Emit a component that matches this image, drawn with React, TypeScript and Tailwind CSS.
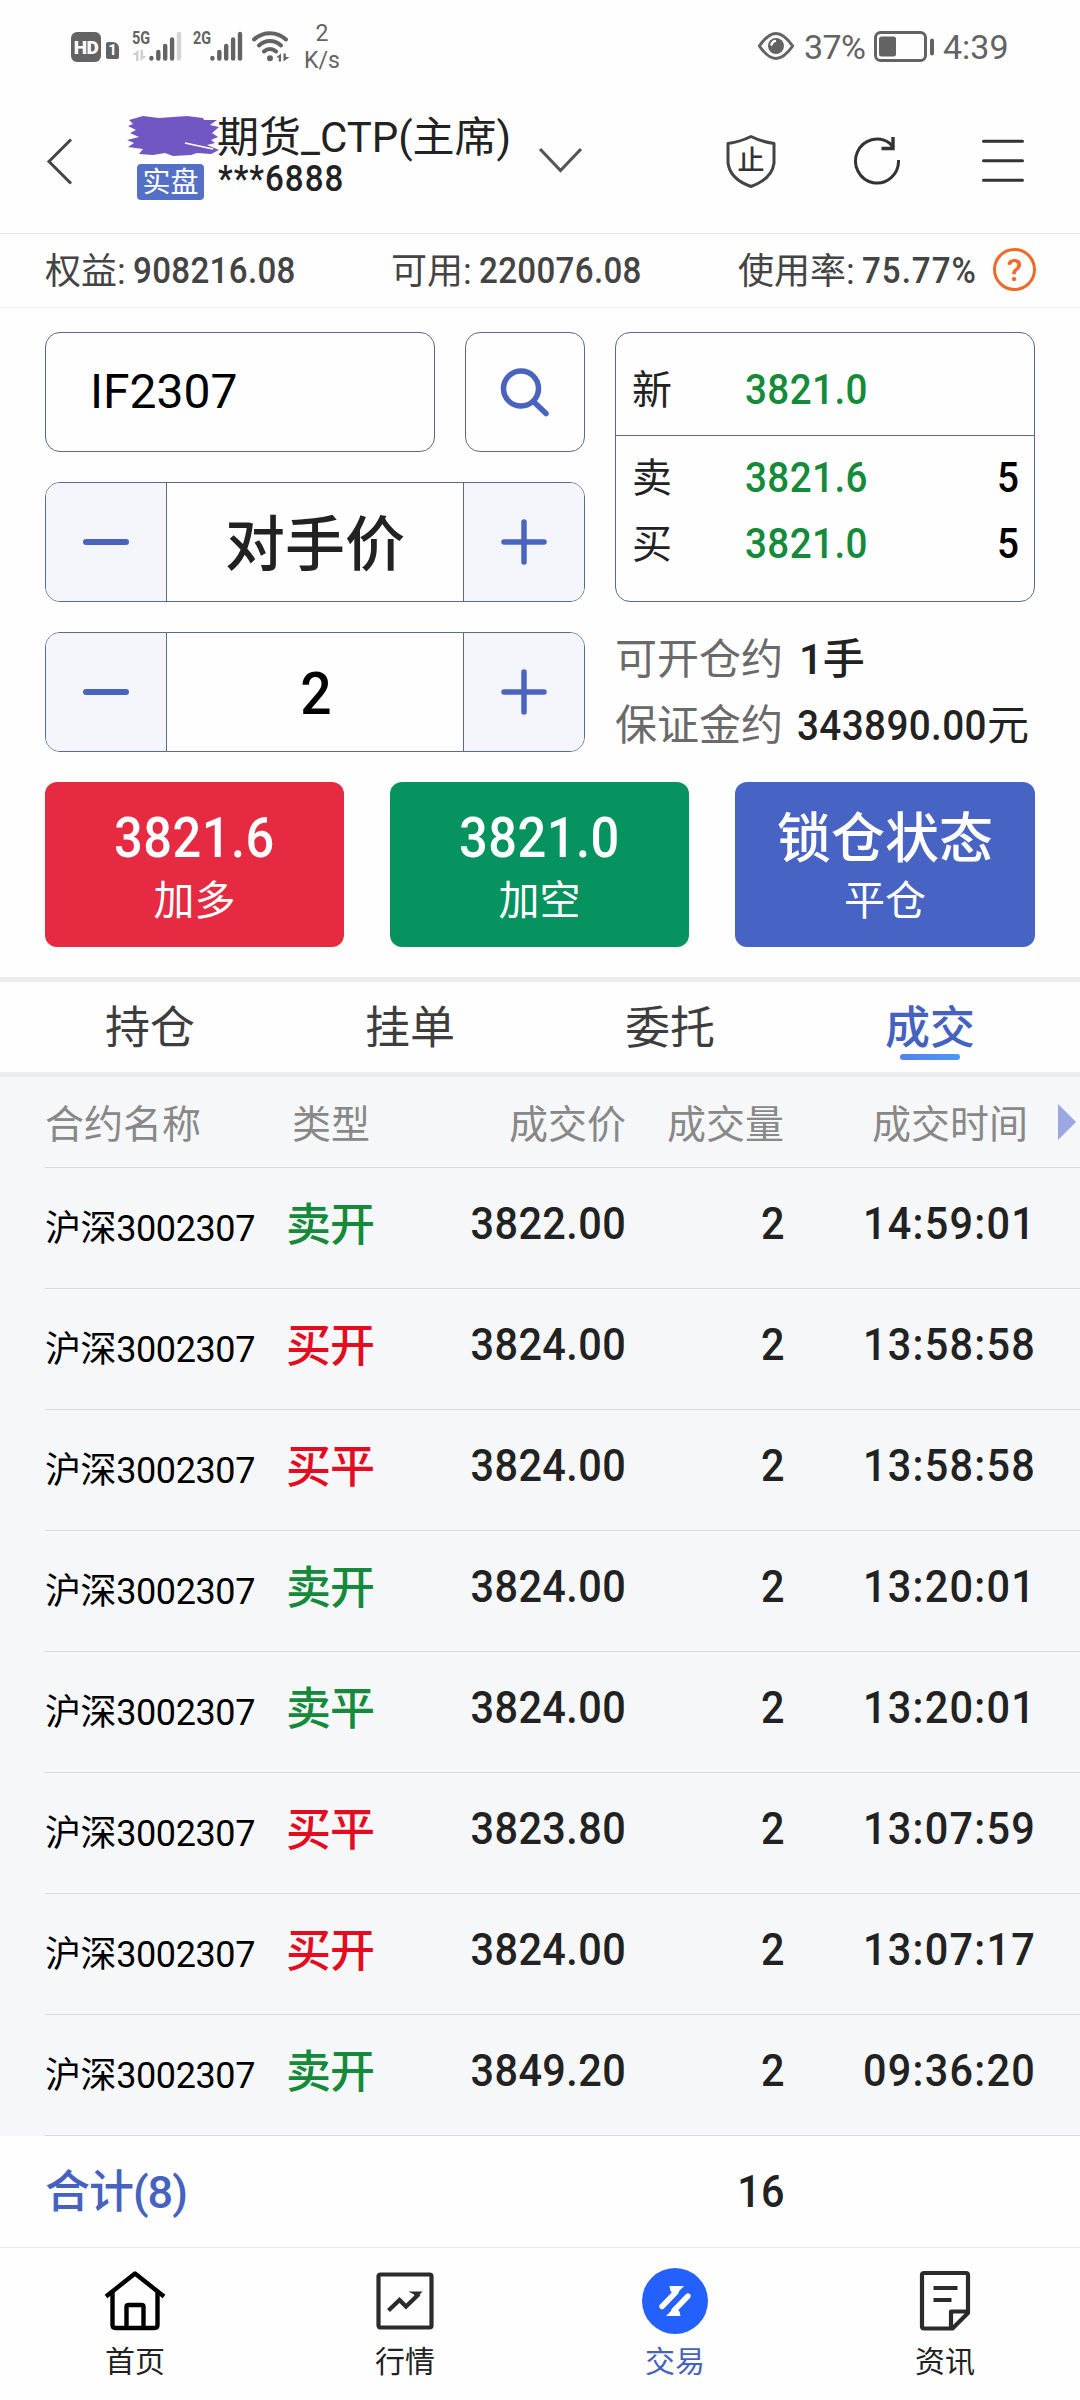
import React from 'react';

/* Narrow numerals used for prices, balances and times. */
function Num({ children, origin = 'left', loose = false, cls = '' }: { children: React.ReactNode; origin?: 'left' | 'right' | 'center'; loose?: boolean; cls?: string }) {
  const side = origin === 'left' ? 'origin-left' : origin === 'right' ? 'origin-right' : 'origin-center';
  const tracking = loose ? 'tracking-[0.03em]' : 'tracking-[0.01em]';
  return <span className={`inline-block scale-x-[0.92] whitespace-nowrap font-medium ${tracking} ${side} ${cls}`}>{children}</span>;
}

function SignalBars({ faded }: { faded: boolean }) {
  return (
    <svg className="h-[30px] w-[33px]" viewBox="0 0 33 30" strokeWidth="4.4" strokeLinecap="round" stroke="#636363">
      <path d="M2.4 27v.6M9.3 21v6.6M16.2 15v12.6M23.1 8.500v19.100" />
      <path d="M30 3v24.600" stroke={faded ? '#d4d4d4' : '#636363'} />
    </svg>
  );
}

function StatusBar() {
  return (
    <div className="flex h-[93px] items-start text-[#636363]">
      <div className="ml-[71px] mt-8 flex h-[30px] w-[30px] items-center justify-center rounded-[6px] bg-[#636363]">
        <span className="text-[19px] font-black leading-none tracking-[-0.5px] text-white">HD</span>
      </div>
      <div className="ml-[5px] mt-[42px] flex h-[17px] w-[13px] items-center justify-center rounded-[2px] rounded-tr-[6px] bg-[#636363] text-[15px] font-bold leading-none text-white">
        1
      </div>
      <div className="ml-[13px] mt-[29px] w-[17px]">
        <div className="h-[18px] w-[17px] origin-left scale-x-[0.76] text-[19px] font-bold leading-[18px]">5G</div>
        <svg className="mt-[3px] h-[11px] w-[15px]" viewBox="0 0 15 11" fill="#cfcfcf">
          <path d="M6.500 0v11h-2.500V5H0zM8.500 0v11l6-5h-3.500V0z" />
        </svg>
      </div>
      <div className="mt-[31px]">
        <SignalBars faded />
      </div>
      <div className="ml-[11px] mt-[29px] h-[18px] w-[17px] origin-left scale-x-[0.76] text-[19px] font-bold leading-[18px]">2G</div>
      <div className="mt-[31px]">
        <SignalBars faded={false} />
      </div>
      <svg className="ml-[9px] mt-[30px] h-[32px] w-[38px]" viewBox="0 0 38 32" fill="none" stroke="#636363" strokeWidth="4" strokeLinecap="round">
        <path d="M2 9.500c9-8.500 23-8.500 32 0M7 15.500c6.500-6 15.500-6 22 0M12 21.500c3.500-3.500 8.500-3.500 12 0" />
        <circle cx="18" cy="28.200" r="3" fill="#636363" stroke="none" />
        <path d="M29 23.500v8h-2.200v-4H24zM31.500 23.500v8l6-4.500h-3.700v-3.500z" fill="#636363" stroke="none" />
      </svg>
      <div className="ml-[13px] mt-[20px] w-[38px] text-center text-[23px] leading-[27px]">
        <div>2</div>
        <div>K/s</div>
      </div>
      <svg className="ml-[416px] mt-[31px] h-[30px] w-[38px]" viewBox="0 0 38 30" fill="none" stroke="#636363" strokeWidth="3">
        <path d="M2.300 15C9 5.500 14 2.500 19 2.500S29 5.500 35.700 15C29 24.500 24 27.500 19 27.500S9 24.500 2.300 15z" strokeLinejoin="round" />
        <circle cx="19" cy="15" r="8" fill="#636363" stroke="none" />
        <path d="M14.500 13.500q1-3 3.500-3.500" stroke="#fff" strokeWidth="2.400" strokeLinecap="round" />
      </svg>
      <div className="ml-[9px] mt-[27px] w-[70px] text-[34px] leading-10 tracking-[-0.6px]">37%</div>
      <svg className="mt-[31px] h-[31px] w-[61px]" viewBox="0 0 61 31">
        <rect x="1.500" y="1.500" width="50" height="28" rx="5" fill="none" stroke="#636363" strokeWidth="3" />
        <rect x="5" y="5.500" width="17" height="20" rx="2.500" fill="#636363" />
        <rect x="56" y="7.500" width="4" height="17" rx="2" fill="#636363" />
      </svg>
      <div className="ml-[8px] mt-[27px] text-[34px] leading-10">4:39</div>
    </div>
  );
}

function TitleBar() {
  return (
    <div className="flex h-[141px] items-start border-b border-[#e9e9e9] text-[#222]">
      <svg className="ml-[46px] mt-[45px] h-[47px] w-[27px]" viewBox="0 0 27 47" fill="none" stroke="#444" strokeWidth="3">
        <path d="M25 1.500L3 23.500L25 45.500" />
      </svg>
      <div className="ml-[54px] mt-[16px] w-[390px]">
        <div className="flex h-[53px] items-center">
          <svg className="h-[42px] w-[94px] shrink-0" viewBox="0 0 94 42" fill="#7157c2">
            <path d="M2 5L16 1L32 3L60 1L76 3L77 5L90 5L83 10L92 12L85 18L91 22L84 25L88 28L80 30L92 35L84 39L70 38L64 40L46 41L38 38L26 40L12 39L16 34L1 32L7 28L0 25L12 22L3 18L9 15L1 11L6 9z" />
            <path d="M58 28L72 31L86 34" stroke="#fff" strokeWidth="1.600" fill="none" />
          </svg>
          <span className="ml-[-4px] mt-[3px] whitespace-nowrap text-[42px] leading-[53px]">期货_CTP(主席)</span>
        </div>
        <div className="flex items-start">
          <div className="ml-[10px] mt-[2px] flex h-[36px] w-[67px] items-center justify-center rounded-[4px] bg-[#5470c6] pt-[2px] text-[28px] leading-none text-white">实盘</div>
          <Num loose cls="ml-[14px] mt-[-1px] text-[36px] leading-[36px]">***6888</Num>
        </div>
      </div>
      <svg className="ml-[20px] mt-[53px] h-[28px] w-[46px]" viewBox="0 0 46 28" fill="none" stroke="#555" strokeWidth="3.200">
        <path d="M3 3L23.500 24.500L44 3" />
      </svg>
      <div className="relative ml-[142px] mt-[41px] h-[54px] w-[52px]">
        <svg className="h-[54px] w-[52px]" viewBox="0 0 52 54" fill="none" stroke="#444" strokeWidth="3" strokeLinejoin="round">
          <path d="M26 2.500Q36 7.500 49 9.500V29Q47 45 26 52.500Q5 45 3 29V9.500Q16 7.500 26 2.500z" />
        </svg>
        <span className="absolute inset-0 flex items-center justify-center text-[27px] font-medium leading-none text-[#333]">止</span>
      </div>
      <svg className="ml-[76px] mt-[42px] h-[52px] w-[50px]" viewBox="0 0 50 52" fill="none" stroke="#333" strokeWidth="3">
        <path d="M45.500 25A21.500 22 0 1 1 37 8.500L40 12.500" />
        <path d="M40 2V13.500H28.500" strokeWidth="3.400" />
      </svg>
      <svg className="ml-[79px] mt-[46px] h-[44px] w-[42px]" viewBox="0 0 42 44" stroke="#333" strokeWidth="3" strokeLinecap="round">
        <path d="M1.500 2.300h39M1.500 21.800h39M1.500 41.300h39" />
      </svg>
    </div>
  );
}

function AccountBar() {
  return (
    <div className="flex h-[74px] items-center whitespace-nowrap border-b border-[#efefef] pl-[45px] text-[36px] leading-10 text-[#444]">
      <div className="flex w-[346px] items-center">
        <span className="w-[88px] pt-[3px]">权益:</span>
        <Num>908216.08</Num>
      </div>
      <div className="flex w-[347px] items-center">
        <span className="w-[88px] pt-[3px]">可用:</span>
        <Num>220076.08</Num>
      </div>
      <div className="flex w-[255px] items-center">
        <span className="w-[124px] pt-[3px]">使用率:</span>
        <Num loose>75.77%</Num>
      </div>
      <div className="mt-[-2px] flex h-[43px] w-[43px] items-center justify-center rounded-full border-[3px] border-[#f06a25] text-[32px] font-medium leading-none text-[#f06a25]">?</div>
    </div>
  );
}

const MinusIcon = () => (
  <svg className="h-[46px] w-[46px]" viewBox="0 0 46 46" stroke="#4a63bd" strokeWidth="6" strokeLinecap="round">
    <path d="M3 23h40" />
  </svg>
);
const PlusIcon = () => (
  <svg className="h-[46px] w-[46px]" viewBox="0 0 46 46" stroke="#4a63bd" strokeWidth="5.500" strokeLinecap="round">
    <path d="M3 23h40M23 3v40" />
  </svg>
);

function Stepper({ children }: { children: React.ReactNode }) {
  return (
    <div className="flex h-[120px] overflow-hidden rounded-[15px] border border-[#5a6a88]">
      <div className="flex w-[121px] items-center justify-center border-r border-[#5a6a88] bg-[#f3f5fb]">
        <MinusIcon />
      </div>
      <div className="flex flex-1 items-center justify-center">{children}</div>
      <div className="flex w-[121px] items-center justify-center border-l border-[#5a6a88] bg-[#f3f5fb]">
        <PlusIcon />
      </div>
    </div>
  );
}

function QuoteLine({ label, price, qty }: { label: string; price: string; qty?: string }) {
  return (
    <div className="flex h-[66px] items-center pl-[16px] pr-[15px] text-[42px] leading-[50px]">
      <span className="w-[113px] pt-[2px] text-[40px] text-[#222]">{label}</span>
      <span className="flex-1 text-[#148a3a]">
        <Num>{price}</Num>
      </span>
      {qty && (
        <Num origin="right" cls="text-black">
          {qty}
        </Num>
      )}
    </div>
  );
}

function OrderForm() {
  return (
    <div className="px-[45px] pb-[30px] pt-6">
      <div className="flex h-[420px] gap-[30px]">
        <div className="flex w-[540px] flex-col gap-[30px]">
          <div className="flex gap-[30px]">
            <div className="flex h-[120px] w-[390px] items-center rounded-[15px] border border-[#5a6a88] pl-[44px] text-[48px] text-black">IF2307</div>
            <div className="flex h-[120px] w-[120px] items-center justify-center rounded-[15px] border border-[#5a6a88]">
              <svg className="h-[50px] w-[50px]" viewBox="0 0 50 50" fill="none" stroke="#4a63bd" strokeWidth="5.500" strokeLinecap="round">
                <ellipse cx="21" cy="21.500" rx="17.500" ry="17.500" />
                <path d="M34 35L46 46.500" />
              </svg>
            </div>
          </div>
          <Stepper>
            <span className="pt-[7px] text-[60px] font-medium leading-[70px] text-[#222]">对手价</span>
          </Stepper>
          <Stepper>
            <Num origin="center" cls="pl-[2px] pt-[4px] text-[60px] leading-[70px] text-black">
              2
            </Num>
          </Stepper>
        </div>
        <div className="w-[420px]">
          <div className="h-[270px] rounded-[15px] border border-[#5a6a88]">
            <div className="border-b border-[#5a6a88] pb-[12px] pt-[24px]">
              <QuoteLine label="新" price="3821.0" />
            </div>
            <div className="pt-[9px]">
              <QuoteLine label="卖" price="3821.6" qty="5" />
              <QuoteLine label="买" price="3821.0" qty="5" />
            </div>
          </div>
          <div className="mt-[25px] whitespace-nowrap text-[42px] leading-[66px] text-[#222]">
            <div className="flex">
              <span className="w-[184px] text-[#6a6a6a]">可开仓约</span>
              <span className="font-medium">1手</span>
            </div>
            <div className="flex">
              <span className="w-[182px] text-[#6a6a6a]">保证金约</span>
              <Num cls="w-[190px]">343890.00</Num>
              <span>元</span>
            </div>
          </div>
        </div>
      </div>
      <div className="mt-[30px] flex justify-between text-center text-white">
        <div className="h-[165px] w-[299px] rounded-xl bg-[#e62a41] pt-[26px]">
          <Num origin="center" cls="text-[55px] leading-[60px]">3821.6</Num>
          <div className="mt-[3px] text-[41px] leading-[60px]">加多</div>
        </div>
        <div className="h-[165px] w-[299px] rounded-xl bg-[#07935f] pt-[26px]">
          <Num origin="center" cls="text-[55px] leading-[60px]">3821.0</Num>
          <div className="mt-[3px] text-[41px] leading-[60px]">加空</div>
        </div>
        <div className="h-[165px] w-[300px] rounded-xl bg-[#4763c3] pt-[28px]">
          <div className="text-[54px] font-medium leading-[60px]">锁仓状态</div>
          <div className="mt-[1px] text-[41px] leading-[60px]">平仓</div>
        </div>
      </div>
    </div>
  );
}

function Tabs() {
  return (
    <div className="flex h-[100px] border-y-[5px] border-[#eceeee] px-5 text-[45px] leading-[60px] text-[#3d3d3d]">
      <div className="w-[260px] pt-[17px] text-center">持仓</div>
      <div className="w-[260px] pt-[17px] text-center">挂单</div>
      <div className="w-[260px] pt-[17px] text-center">委托</div>
      <div className="flex w-[260px] flex-col items-center pt-[17px] font-medium text-[#4562c0]">
        成交
        <div className="mt-[-5px] h-[6px] w-[60px] rounded-full bg-gradient-to-r from-[#5580f2] to-[#4d97f0]" />
      </div>
    </div>
  );
}

const G = 'text-[#148a3a]';
const R = 'text-[#e30c20]';
const trades: [string, string, string, string][] = [
  ['卖开', G, '3822.00', '14:59:01'],
  ['买开', R, '3824.00', '13:58:58'],
  ['买平', R, '3824.00', '13:58:58'],
  ['卖开', G, '3824.00', '13:20:01'],
  ['卖平', G, '3824.00', '13:20:01'],
  ['买平', R, '3823.80', '13:07:59'],
  ['买开', R, '3824.00', '13:07:17'],
  ['卖开', G, '3849.20', '09:36:20'],
];

function TradeTable() {
  return (
    <div className="bg-[#f5f7f9] pl-[45px]">
      <div className="flex h-[91px] items-center border-b border-[#d8dadd] pt-[5px] text-[39px] leading-[50px] text-[#888]">
        <span className="w-[247px]">合约名称</span>
        <span className="w-[150px]">类型</span>
        <span className="w-[184px] text-right">成交价</span>
        <span className="w-[158px] text-right">成交量</span>
        <span className="w-[244px] text-right">成交时间</span>
        <svg className="mb-[5px] ml-[30px] h-[36px] w-[18px]" viewBox="0 0 18 36" fill="#9aa7e2">
          <path d="M0 0L18 18L0 36z" />
        </svg>
      </div>
      {trades.map(([type, color, price, time], i) => (
        <div key={i} className="flex h-[121px] items-center border-b border-[#d8dadd] text-[45px] leading-[60px] text-[#222]">
          <span className="w-[241px] pt-[2px] text-[36px] tracking-[-0.4px] text-black">沪深3002307</span>
          <span className={`w-[150px] pb-[5px] font-medium tracking-[-1px] ${color}`}>{type}</span>
          <span className="w-[190px] pb-[9px] text-right">
            <Num origin="right">{price}</Num>
          </span>
          <span className="w-[159px] pb-[9px] text-right">
            <Num origin="right">2</Num>
          </span>
          <span className="w-[251px] pb-[9px] text-right">
            <Num origin="right" loose>
              {time}
            </Num>
          </span>
        </div>
      ))}
    </div>
  );
}

function TotalRow() {
  return (
    <div className="flex h-[112px] items-center border-b border-[#ebebeb] pl-[45px] text-[45px] font-medium leading-[60px]">
      <span className="w-[400px] pt-[2px] tracking-[-1px] text-[#4562c0]">合计(8)</span>
      <span className="w-[340px] text-right text-[#222]">
        <Num origin="right">16</Num>
      </span>
    </div>
  );
}

function BottomNav() {
  const label = 'mt-[10px] text-[30px] leading-9';
  return (
    <div className="grid h-[152px] grid-cols-4 pt-[20px] text-[#222]">
      <div className="flex flex-col items-center">
        <svg className="h-[66px] w-[66px]" viewBox="0 0 66 66" fill="none" stroke="#000" strokeWidth="4.400" strokeLinejoin="round">
          <path d="M4 28.500L33 5.500L62 28.500" />
          <path d="M10.500 24V57Q10.500 60 13.500 60H52.500Q55.500 60 55.500 57V24" />
          <path d="M24.500 60V39Q24.500 37 26.500 37H39.500Q41.500 37 41.500 39V60" />
        </svg>
        <span className={label}>首页</span>
      </div>
      <div className="flex flex-col items-center">
        <svg className="h-[66px] w-[66px]" viewBox="0 0 66 66" fill="none" stroke="#2b2b2b" strokeWidth="4.200">
          <rect x="6.500" y="6.500" width="53" height="53" rx="2" />
          <path d="M16.500 42.500L27.500 32L34 38.500L47 26" />
          <path d="M36.500 23.500h14l-7 7.500l-1.500-4.500z" fill="#2b2b2b" stroke="none" />
        </svg>
        <span className={label}>行情</span>
      </div>
      <div className="flex flex-col items-center">
        <svg className="h-[66px] w-[66px]" viewBox="0 0 66 66">
          <circle cx="33" cy="33" r="33" fill="#2360fd" />
          <path d="M20 38.500L34 24M46 28L32 42.500" stroke="#fff" strokeWidth="5.400" strokeLinecap="round" />
          <path d="M27.500 18H42L33 27.500L28.500 23zM38.500 48H24L33 39L37.500 43.500z" fill="#fff" />
        </svg>
        <span className={`${label} text-[#4562c0]`}>交易</span>
      </div>
      <div className="flex flex-col items-center">
        <svg className="h-[66px] w-[66px]" viewBox="0 0 66 66" fill="none" stroke="#2b2b2b" strokeWidth="4.200" strokeLinejoin="round">
          <path d="M56 45V7Q56 5 54 5H12Q10 5 10 7V58.500Q10 60.500 12 60.500H40.500z" />
          <path d="M39 60V43.500H55.500" />
          <path d="M21.500 20h24M21.500 32h18" />
        </svg>
        <span className={label}>资讯</span>
      </div>
    </div>
  );
}

export default function App() {
  return (
    <div className="h-[2400px] w-[1080px] overflow-hidden bg-[#fefefe] font-['Roboto','Noto_Sans_CJK_SC',sans-serif]">
      <StatusBar />
      <TitleBar />
      <AccountBar />
      <OrderForm />
      <Tabs />
      <TradeTable />
      <TotalRow />
      <BottomNav />
    </div>
  );
}
